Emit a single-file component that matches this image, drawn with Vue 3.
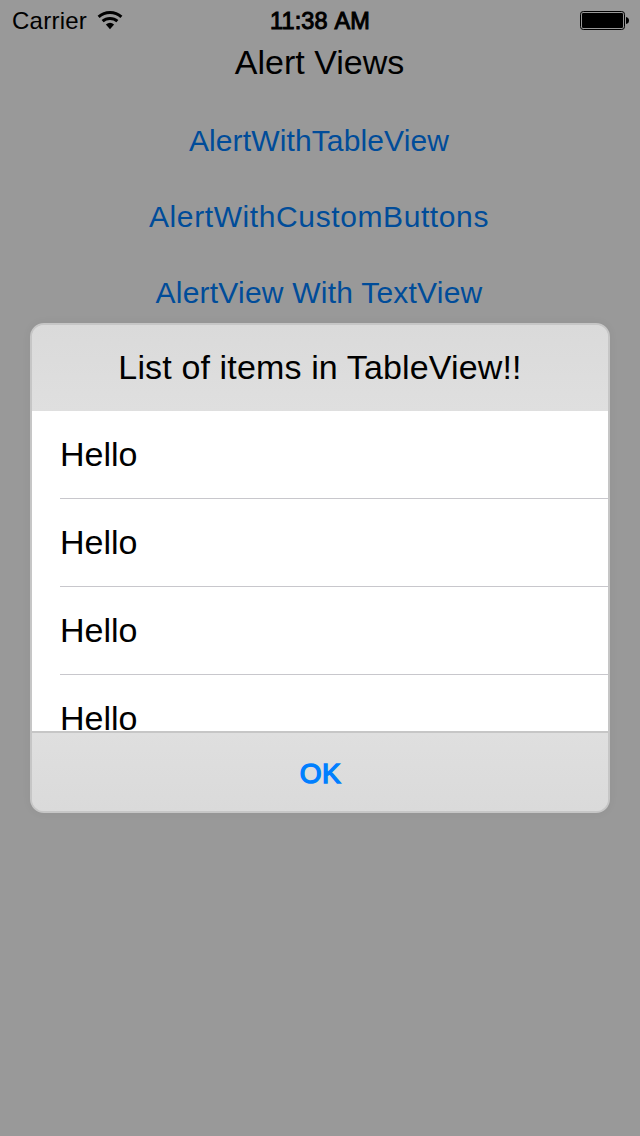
<script setup>
const actions = [
  { label: 'AlertWithTableView', cls: 'table' },
  { label: 'AlertWithCustomButtons', cls: 'custom' },
  { label: 'AlertView With TextView', cls: 'text' },
]
const items = ['Hello', 'Hello', 'Hello', 'Hello']
</script>

<template>
  <main class="screen">
    <header class="status">
      <div class="carrier">
        <span class="carrier-name">Carrier</span>
        <svg class="wifi" width="26" height="19" viewBox="0 0 26 19">
          <g fill="none" stroke="#000" stroke-width="3">
            <path d="M1.6 5.9 A17 17 0 0 1 24.4 5.9" />
            <path d="M5.6 10.2 A11.2 11.2 0 0 1 20.4 10.2" />
          </g>
          <path d="M8.9 13.5 A6.4 6.4 0 0 1 17.1 13.5 L13 18.2 Z" fill="#000" />
        </svg>
      </div>
      <span class="time">11:38 AM</span>
      <div class="battery">
        <svg width="50" height="20" viewBox="0 0 50 20">
          <rect x="0.5" y="0.5" width="44" height="18" rx="2.8" fill="none" stroke="#000" />
          <rect x="2" y="2" width="41" height="15" rx="1.2" fill="#000" />
          <path d="M46 6 Q49 6.5 49 9.5 Q49 12.5 46 13 Z" fill="#000" />
        </svg>
      </div>
    </header>
    <h1 class="title"><span>Alert Views</span></h1>
    <nav class="actions">
      <button v-for="a in actions" :key="a.label" :class="['action', a.cls]">{{ a.label }}</button>
    </nav>
    <section class="alert">
      <h2 class="alert-title"><span>List of items in TableView!!</span></h2>
      <ul class="list">
        <li v-for="(item, i) in items" :key="i" class="row"><span>{{ item }}</span></li>
      </ul>
      <button class="ok">OK</button>
    </section>
  </main>
</template>

<style>
body {
  background: #999;
}
</style>

<style scoped>
.screen {
  width: 640px;
  height: 1136px;
  overflow: hidden;
  background: #999;
  color: #000;
  font-family: "Liberation Sans", Arial, sans-serif;
}
button {
  border: 0;
  padding: 0;
  background: none;
  font-family: inherit;
}
.status {
  display: grid;
  grid-template-columns: 1fr auto 1fr;
  height: 40px;
  align-items: start;
  font-size: 24px;
  line-height: 40px;
}
.carrier {
  display: flex;
  padding-left: 12px;
  gap: 10px;
}
.carrier-name {
  letter-spacing: 0.25px;
  line-height: 41px;
}
.wifi {
  margin-top: 11px;
}
.time {
  font-size: 23.5px;
  letter-spacing: 0.1px;
  word-spacing: 1.5px;
  -webkit-text-stroke: 1px #000;
  line-height: 42px;
}
.battery {
  display: flex;
  justify-content: flex-end;
  padding-right: 10px;
  padding-top: 11px;
}
.title,
.alert-title {
  margin: 0;
  font-weight: 400;
  font-size: 34px;
  text-align: center;
}
.title {
  height: 63px;
  line-height: 44px;
  padding-right: 1px;
}
.actions {
  display: flex;
  flex-direction: column;
  height: 220px;
  padding-right: 2px;
}
.action {
  height: 76px;
  line-height: 76px;
  flex: none;
  font-size: 30px;
  color: #004c99;
}
.table {
  letter-spacing: 0.13px;
}
.custom {
  letter-spacing: 0.6px;
}
.text {
  letter-spacing: 0.22px;
}
.alert {
  display: flex;
  flex-direction: column;
  box-sizing: border-box;
  width: 580px;
  height: 490px;
  margin: 0 auto;
  position: relative;
  overflow: hidden;
  border: 2px solid #c6c6c6;
  border-radius: 14px;
  background: #dadada;
  box-shadow: 0 0 10px rgba(0, 0, 0, 0.05);
}
.alert-title {
  height: 86px;
  line-height: 84px;
  letter-spacing: 0.14px;
  background: linear-gradient(#dadada, #dfdfdf);
}
.list {
  height: 320px;
  margin: 0;
  padding: 0 0 0 28px;
  overflow: hidden;
  list-style: none;
  background: #fff;
}
.row {
  box-sizing: border-box;
  height: 88px;
  border-bottom: 1px solid #c8c7cc;
  font-size: 34px;
  line-height: 86px;
}
.ok {
  height: 80px;
  padding: 1px 0 0 1px;
  border-top: 2px solid #c6c6c6;
  background: linear-gradient(#dfdfdf, #dadada);
  color: #007fff;
  font-size: 28px;
  line-height: 80px;
  letter-spacing: 0.6px;
  -webkit-text-stroke: 1.4px #007fff;
}
</style>
